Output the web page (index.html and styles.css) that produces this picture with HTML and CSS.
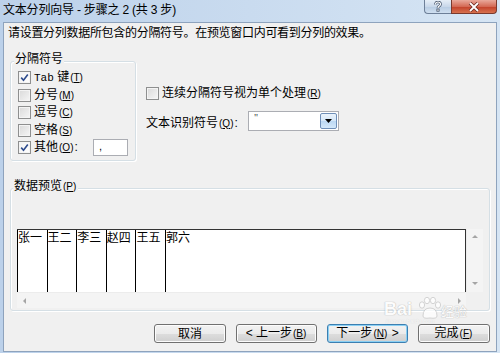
FILE: index.html
```html
<!DOCTYPE html>
<html lang="zh-CN">
<head>
    <meta charset="UTF-8">
    <title>文本分列向导 - 步骤之 2 (共 3 步)</title>
    <link rel="stylesheet" href="styles.css">
</head>
<body>
    <div class="window">
        <div class="titlebar">
            <span class="title">文本分列向导 - 步骤之 2 (共 3 步)</span>
            <div class="caption">
                <span class="cap-btn cap-help">
                    <svg width="10" height="11" viewBox="0 0 10 11"><path d="M2.5 3.5 Q2.5 1 5 1 Q7.5 1 7.5 3.3 Q7.5 4.6 5.8 5.4 Q5 5.8 5 7" fill="none" stroke="#3d4c63" stroke-width="2.6"/><path d="M2.5 3.5 Q2.5 1 5 1 Q7.5 1 7.5 3.3 Q7.5 4.6 5.8 5.4 Q5 5.8 5 7" fill="none" stroke="#fff" stroke-width="1.2"/><rect x="3.9" y="8" width="2.2" height="2.2" fill="#fff" stroke="#3d4c63" stroke-width="0.8"/></svg>
                </span>
                <span class="cap-btn cap-close">
                    <svg width="12" height="10" viewBox="0 0 12 10"><path d="M2 1 L10 9 M10 1 L2 9" stroke="#6b2a20" stroke-width="3.4"/><path d="M2 1 L10 9 M10 1 L2 9" stroke="#fff" stroke-width="1.8"/></svg>
                </span>
            </div>
        </div>

        <div class="client">
            <p class="intro">请设置分列数据所包含的分隔符号。在预览窗口内可看到分列的效果。</p>

            <div class="options">
                <div class="group delims">
                    <div class="group-title">分隔符号</div>
                    <div class="rows">
                        <label class="check">
                            <span class="box checked"><svg width="9" height="9" viewBox="0 0 9 9"><path d="M1.2 4.6 L3.5 7.2 L7.8 1.4" fill="none" stroke="#2c4a8c" stroke-width="1.6"/></svg></span>
                            <span><span class="latin">Tab</span> 键<span class="key">(<u>T</u>)</span></span>
                        </label>
                        <label class="check">
                            <span class="box"></span>
                            <span>分号<span class="key">(<u>M</u>)</span></span>
                        </label>
                        <label class="check">
                            <span class="box"></span>
                            <span>逗号<span class="key">(<u>C</u>)</span></span>
                        </label>
                        <label class="check">
                            <span class="box"></span>
                            <span>空格<span class="key">(<u>S</u>)</span></span>
                        </label>
                        <label class="check">
                            <span class="box checked"><svg width="9" height="9" viewBox="0 0 9 9"><path d="M1.2 4.6 L3.5 7.2 L7.8 1.4" fill="none" stroke="#2c4a8c" stroke-width="1.6"/></svg></span>
                            <span class="other-label">其他<span class="key">(<u>O</u>)</span>:</span>
                            <span class="textbox">,</span>
                        </label>
                    </div>
                </div>

                <div class="side">
                    <label class="check">
                        <span class="box"></span>
                        <span>连续分隔符号视为单个处理<span class="key">(<u>R</u>)</span></span>
                    </label>
                    <div class="qualifier">
                        <span class="qualifier-label">文本识别符号<span class="key">(<u>Q</u>)</span>:</span>
                        <div class="combo">
                            <span class="combo-value">"</span>
                            <span class="combo-btn"><svg width="7" height="4" viewBox="0 0 7 4"><path d="M0 0 H7 L3.5 4 Z" fill="#000"/></svg></span>
                        </div>
                    </div>
                </div>
            </div>

            <div class="group preview">
                <div class="group-title">数据预览<span class="key">(<u>P</u>)</span></div>
                <div class="scroll">
                    <div class="sheet">
                        <span class="col">张一</span>
                        <span class="col">王二</span>
                        <span class="col">李三</span>
                        <span class="col">赵四</span>
                        <span class="col">王五</span>
                        <span class="col">郭六</span>
                    </div>
                    <div class="vscroll">
                        <span class="arrow up"></span>
                        <span class="arrow down"></span>
                    </div>
                    <div class="hscroll">
                        <span class="arrow left"></span>
                        <span class="arrow right"></span>
                    </div>
                    <div class="corner"></div>
                </div>
            </div>

            <div class="buttons">
                <button class="btn small">取消</button>
                <button class="btn">&lt; 上一步<span class="key">(<u>B</u>)</span></button>
                <button class="btn default">下一步<span class="key">(<u>N</u>)</span> &gt;</button>
                <button class="btn small">完成<span class="key">(<u>F</u>)</span></button>
            </div>
        </div>

        <div class="watermark">
            <span class="wm-bai">Bai</span>
            <svg class="wm-paw" width="24" height="24" viewBox="0 0 24 24">
                <g fill="#fff" stroke="#c8c8c8" stroke-width="1">
                    <ellipse cx="5" cy="9" rx="2.6" ry="3.2"/>
                    <ellipse cx="10" cy="4.5" rx="2.6" ry="3.2"/>
                    <ellipse cx="16" cy="4.5" rx="2.6" ry="3.2"/>
                    <ellipse cx="21" cy="9" rx="2.6" ry="3.2"/>
                    <path d="M6 20 Q6 12 13 12 Q20 12 20 20 Q20 23 13 22 Q6 23 6 20 Z"/>
                </g>
            </svg>
            <span class="wm-jy">经验</span>
            <span class="wm-url">jingyan.baidu.com</span>
        </div>
    </div>
</body>
</html>
```

FILE: styles.css
```css
* {
    box-sizing: border-box;
}
body {
    margin: 0;
    font-family: "Liberation Sans", "Noto Sans CJK SC", sans-serif;
    font-size: 12px;
    color: #000;
}
.window {
    position: relative;
    width: 500px;
    height: 353px;
    padding: 0 3px 1px 3px;
    background: linear-gradient(to right, #bcd1ea, #d6e5f4);
    display: flex;
    flex-direction: column;
    overflow: hidden;
}
.titlebar {
    height: 22px;
    display: flex;
    justify-content: space-between;
    align-items: flex-start;
}
.title {
    line-height: 20px;
    letter-spacing: -0.2px;
}
.caption {
    display: flex;
}
.cap-btn {
    height: 14px;
    display: flex;
    align-items: center;
    justify-content: center;
    border: 1px solid #6d7f98;
    border-top: none;
}
.cap-help {
    width: 27px;
    border-radius: 0 0 0 4px;
    border-right: none;
    background: linear-gradient(#e6eef7, #c9d8ea 50%, #b7cbe2 51%, #cfdff0);
}
.cap-close {
    width: 46px;
    border-radius: 0 0 4px 0;
    border-color: #7a3a2e;
    background: linear-gradient(#e9a99b, #d46a55 50%, #c2402a 51%, #d7724f);
}
.client {
    height: 330px;
    border: 1px solid #8ea3bd;
    background: #f0f0f0;
    padding: 0 6px;
}
.intro {
    margin: 2px 0 0 -2px;
    line-height: 16px;
    letter-spacing: -0.3px;
}
.key {
    font-size: 10px;
    letter-spacing: 0;
    margin: 0 1px;
}
.latin {
    font-family: "Liberation Mono", monospace;
    font-size: 11px;
}
.group {
    border: 1px solid #d5dfe5;
    border-radius: 3px;
    box-shadow: inset 1px 1px 0 #fff, 1px 1px 0 #fff;
}
.group-title {
    display: table;
    margin: -11px 0 0 -4px;
    padding: 0 1px;
    line-height: 16px;
    background: #f0f0f0;
}
.options {
    display: flex;
    align-items: flex-start;
    margin-top: 20px;
}
.delims {
    width: 126px;
    height: 100px;
    padding-left: 7px;
}
.rows {
    margin-top: 2px;
}
.check {
    display: flex;
    align-items: center;
    height: 17.5px;
    line-height: 16px;
}
.box {
    width: 13px;
    height: 13px;
    margin-right: 3px;
    border: 1px solid #8e8f8f;
    background: linear-gradient(135deg, #d9d9d9, #f6f6f6);
    box-shadow: inset 0 0 0 1px #f4f4f4;
    display: flex;
    align-items: center;
    justify-content: center;
}
.box.checked {
    background: linear-gradient(135deg, #f1f1f1, #ffffff);
}
.other-label {
    width: 59px;
}
.textbox {
    width: 35px;
    height: 17px;
    border: 1px solid #abadb3;
    background: #fff;
    padding-left: 5px;
    line-height: 13px;
    font-size: 11px;
}
.side {
    margin-left: 10px;
}
.side .check {
    margin-top: 24px;
    height: 16px;
}
.qualifier {
    display: flex;
    align-items: center;
    margin-top: 10px;
    height: 20px;
}
.qualifier-label {
    width: 102px;
}
.combo {
    width: 91px;
    height: 20px;
    border: 1px solid #abadb3;
    background: #fff;
    padding: 1px;
    display: flex;
    justify-content: space-between;
}
.combo-value {
    font-family: "Liberation Serif", serif;
    font-size: 10px;
    line-height: 10px;
    padding-left: 4px;
    color: #333;
}
.combo-btn {
    width: 17px;
    height: 16px;
    border: 1px solid #6f8fb8;
    border-radius: 2px;
    background: linear-gradient(#eaf3fc, #d5e7f8 50%, #bcd8f3 51%, #d4e8fa);
    display: flex;
    align-items: center;
    justify-content: center;
}
.preview {
    margin-top: 27px;
    width: 480px;
    height: 123px;
    padding-left: 6px;
}
.scroll {
    margin-top: 34px;
    display: grid;
    grid-template-columns: 449px 17px;
    grid-template-rows: 63px 16px;
    width: 466px;
}
.sheet {
    background: #fff;
    border-top: 1px solid #333;
    border-right: 1px solid #333;
    display: flex;
}
.col {
    width: 29.6px;
    border-left: 1px solid #000;
    line-height: 15px;
    padding-top: 1px;
    white-space: nowrap;
}
.col:last-child {
    width: auto;
}
.vscroll {
    background: #f4f4f4;
    border-left: 1px solid #ececec;
    display: flex;
    flex-direction: column;
    justify-content: space-between;
    align-items: center;
    padding: 6px 0 7px;
}
.hscroll {
    background: #f4f4f4;
    border-top: 1px solid #ececec;
    display: flex;
    justify-content: space-between;
    align-items: center;
    padding: 0 5px 0 6px;
}
.corner {
    background: #f0f0f0;
}
.arrow {
    width: 0;
    height: 0;
    border: 3px solid transparent;
}
.arrow.up {
    border-bottom: 3px solid #a5a5a5;
    border-top: none;
}
.arrow.down {
    border-top: 3px solid #a5a5a5;
    border-bottom: none;
}
.arrow.left {
    border-right: 3px solid #a5a5a5;
    border-left: none;
}
.arrow.right {
    border-left: 3px solid #a5a5a5;
    border-right: none;
}
.buttons {
    display: flex;
    justify-content: flex-end;
    gap: 10px;
    margin-top: 13px;
}
.btn {
    width: 81px;
    height: 19px;
    padding: 0;
    border: 1px solid #707070;
    border-radius: 3px;
    background: linear-gradient(#f2f2f2, #ebebeb 50%, #dddddd 51%, #cfcfcf);
    box-shadow: inset 0 0 0 1px #fcfcfc;
    font-family: "Liberation Sans", "Noto Sans CJK SC", sans-serif;
    font-size: 12px;
    line-height: 16px;
    color: #000;
}
.btn.small {
    width: 72px;
}
.btn.default {
    border-color: #3c7fb1;
    box-shadow: inset 0 0 0 1px #8ad0f4;
}
.watermark {
    position: absolute;
    left: 384px;
    top: 294px;
    width: 100px;
    height: 30px;
    opacity: 0.75;
    pointer-events: none;
}
.wm-bai {
    position: absolute;
    left: 0;
    top: 5px;
    font-family: "Liberation Sans", sans-serif;
    font-size: 18px;
    line-height: 20px;
    font-weight: bold;
    color: #fff;
    text-shadow: 0 0 1px #aaa, 0 0 1px #aaa;
}
.wm-paw {
    position: absolute;
    left: 33px;
    top: 2px;
}
.wm-jy {
    position: absolute;
    left: 57px;
    top: 10px;
    font-size: 13px;
    line-height: 15px;
    color: #fff;
    text-shadow: 0 0 1px #aaa, 0 0 1px #aaa;
}
.wm-url {
    position: absolute;
    left: 2px;
    top: 24px;
    font-size: 6px;
    line-height: 6px;
    color: #fff;
    text-shadow: 0 0 1px #bbb;
}
```
